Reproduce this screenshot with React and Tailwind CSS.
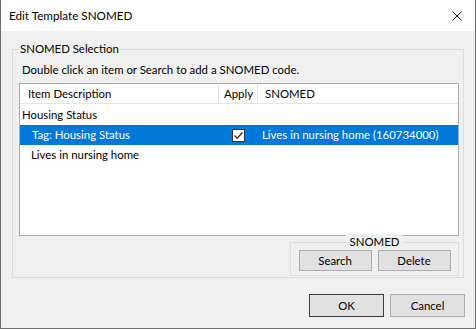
import React from "react";

const font = { fontFamily: 'Lato, "Noto Sans", sans-serif' };

function Btn({ children, w = "w-[75px]", h = "h-[23px]", def }) {
  return (
    <div
      className={`${w} ${h} flex items-center justify-center bg-[#e1e1e1] text-black border ${
        def ? "border-[#3c3c3c]" : "border-[#adadad]"
      }`}
    >
      {children}
    </div>
  );
}

export default function App() {
  return (
    <div
      className="w-[476px] h-[329px] bg-[#f0f0f0] border-x border-b border-[#6f6f6f] flex flex-col text-[11.4px] text-black overflow-hidden whitespace-nowrap"
      style={font}
    >
      <div className="h-[31px] bg-white flex items-center justify-between pl-[8px] pr-[13px] shrink-0">
        <span className="text-[11.7px] leading-none">Edit Template SNOMED</span>
        <svg width="10" height="10" viewBox="0 0 10 10">
          <path d="M0.5 0.5 L9.5 9.5 M9.5 0.5 L0.5 9.5" stroke="#111" strokeWidth="1" />
        </svg>
      </div>

      <div className="relative ml-[11px] mt-[18px] w-[452px] h-[229px] border border-[#dcdcdc] flex flex-col">
        <span className="absolute -top-[9px] left-[6px] bg-[#f0f0f0] px-[1px] leading-[16px]">
          SNOMED Selection
        </span>
        <div className="pl-[9px] mt-[12px] h-[16px] leading-[16px]">
          Double click an item or Search to add a SNOMED code.
        </div>
        <div className="ml-[6px] mt-[5px] w-[440px] h-[153px] bg-white border border-[#acacac] flex flex-col">
          <div className="flex h-[20px] border-b border-[#e5e5e5] leading-[19px]">
            <div className="w-[199px] pl-[8px] border-r border-[#e5e5e5]">Item Description</div>
            <div className="w-[39px] pl-[5px] border-r border-[#e5e5e5]">Apply</div>
            <div className="pl-[7px]">SNOMED</div>
          </div>
          <div className="h-[21px] leading-[21px] pl-[2px]">Housing Status</div>
          <div className="h-[20px] flex items-center bg-[#0078d7] text-white">
            <div className="w-[212px] shrink-0 pl-[12px]">Tag: Housing Status</div>
            <div className="w-[30px] shrink-0 flex items-center">
              <div className="w-[13px] h-[13px] bg-white border border-[#333] flex items-center justify-center">
                <svg width="11" height="11" viewBox="0 0 11 11">
                  <path d="M1.5 5.5 L4.2 8.2 L9.5 2.5" stroke="#222" strokeWidth="1.2" fill="none" />
                </svg>
              </div>
            </div>
            <div className="flex-1 whitespace-nowrap">Lives in nursing home (160734000)</div>
          </div>
          <div className="h-[20px] leading-[20px] pl-[11px]">Lives in nursing home</div>
        </div>
        <div className="relative ml-[277px] mt-[6px] w-[169px] h-[34px] border border-[#dcdcdc] flex items-start justify-center gap-[6px] pt-[7px]">
          <span className="absolute -top-[9px] left-1/2 -translate-x-1/2 bg-[#f0f0f0] px-[4px] leading-[16px]">
            SNOMED
          </span>
          <Btn w="w-[73px]" h="h-[21px]">Search</Btn>
          <Btn w="w-[73px]" h="h-[21px]">Delete</Btn>
        </div>
      </div>

      <div className="flex justify-end gap-[6px] mr-[10px] mt-[16px]">
        <Btn def>OK</Btn>
        <Btn>Cancel</Btn>
      </div>
    </div>
  );
}
